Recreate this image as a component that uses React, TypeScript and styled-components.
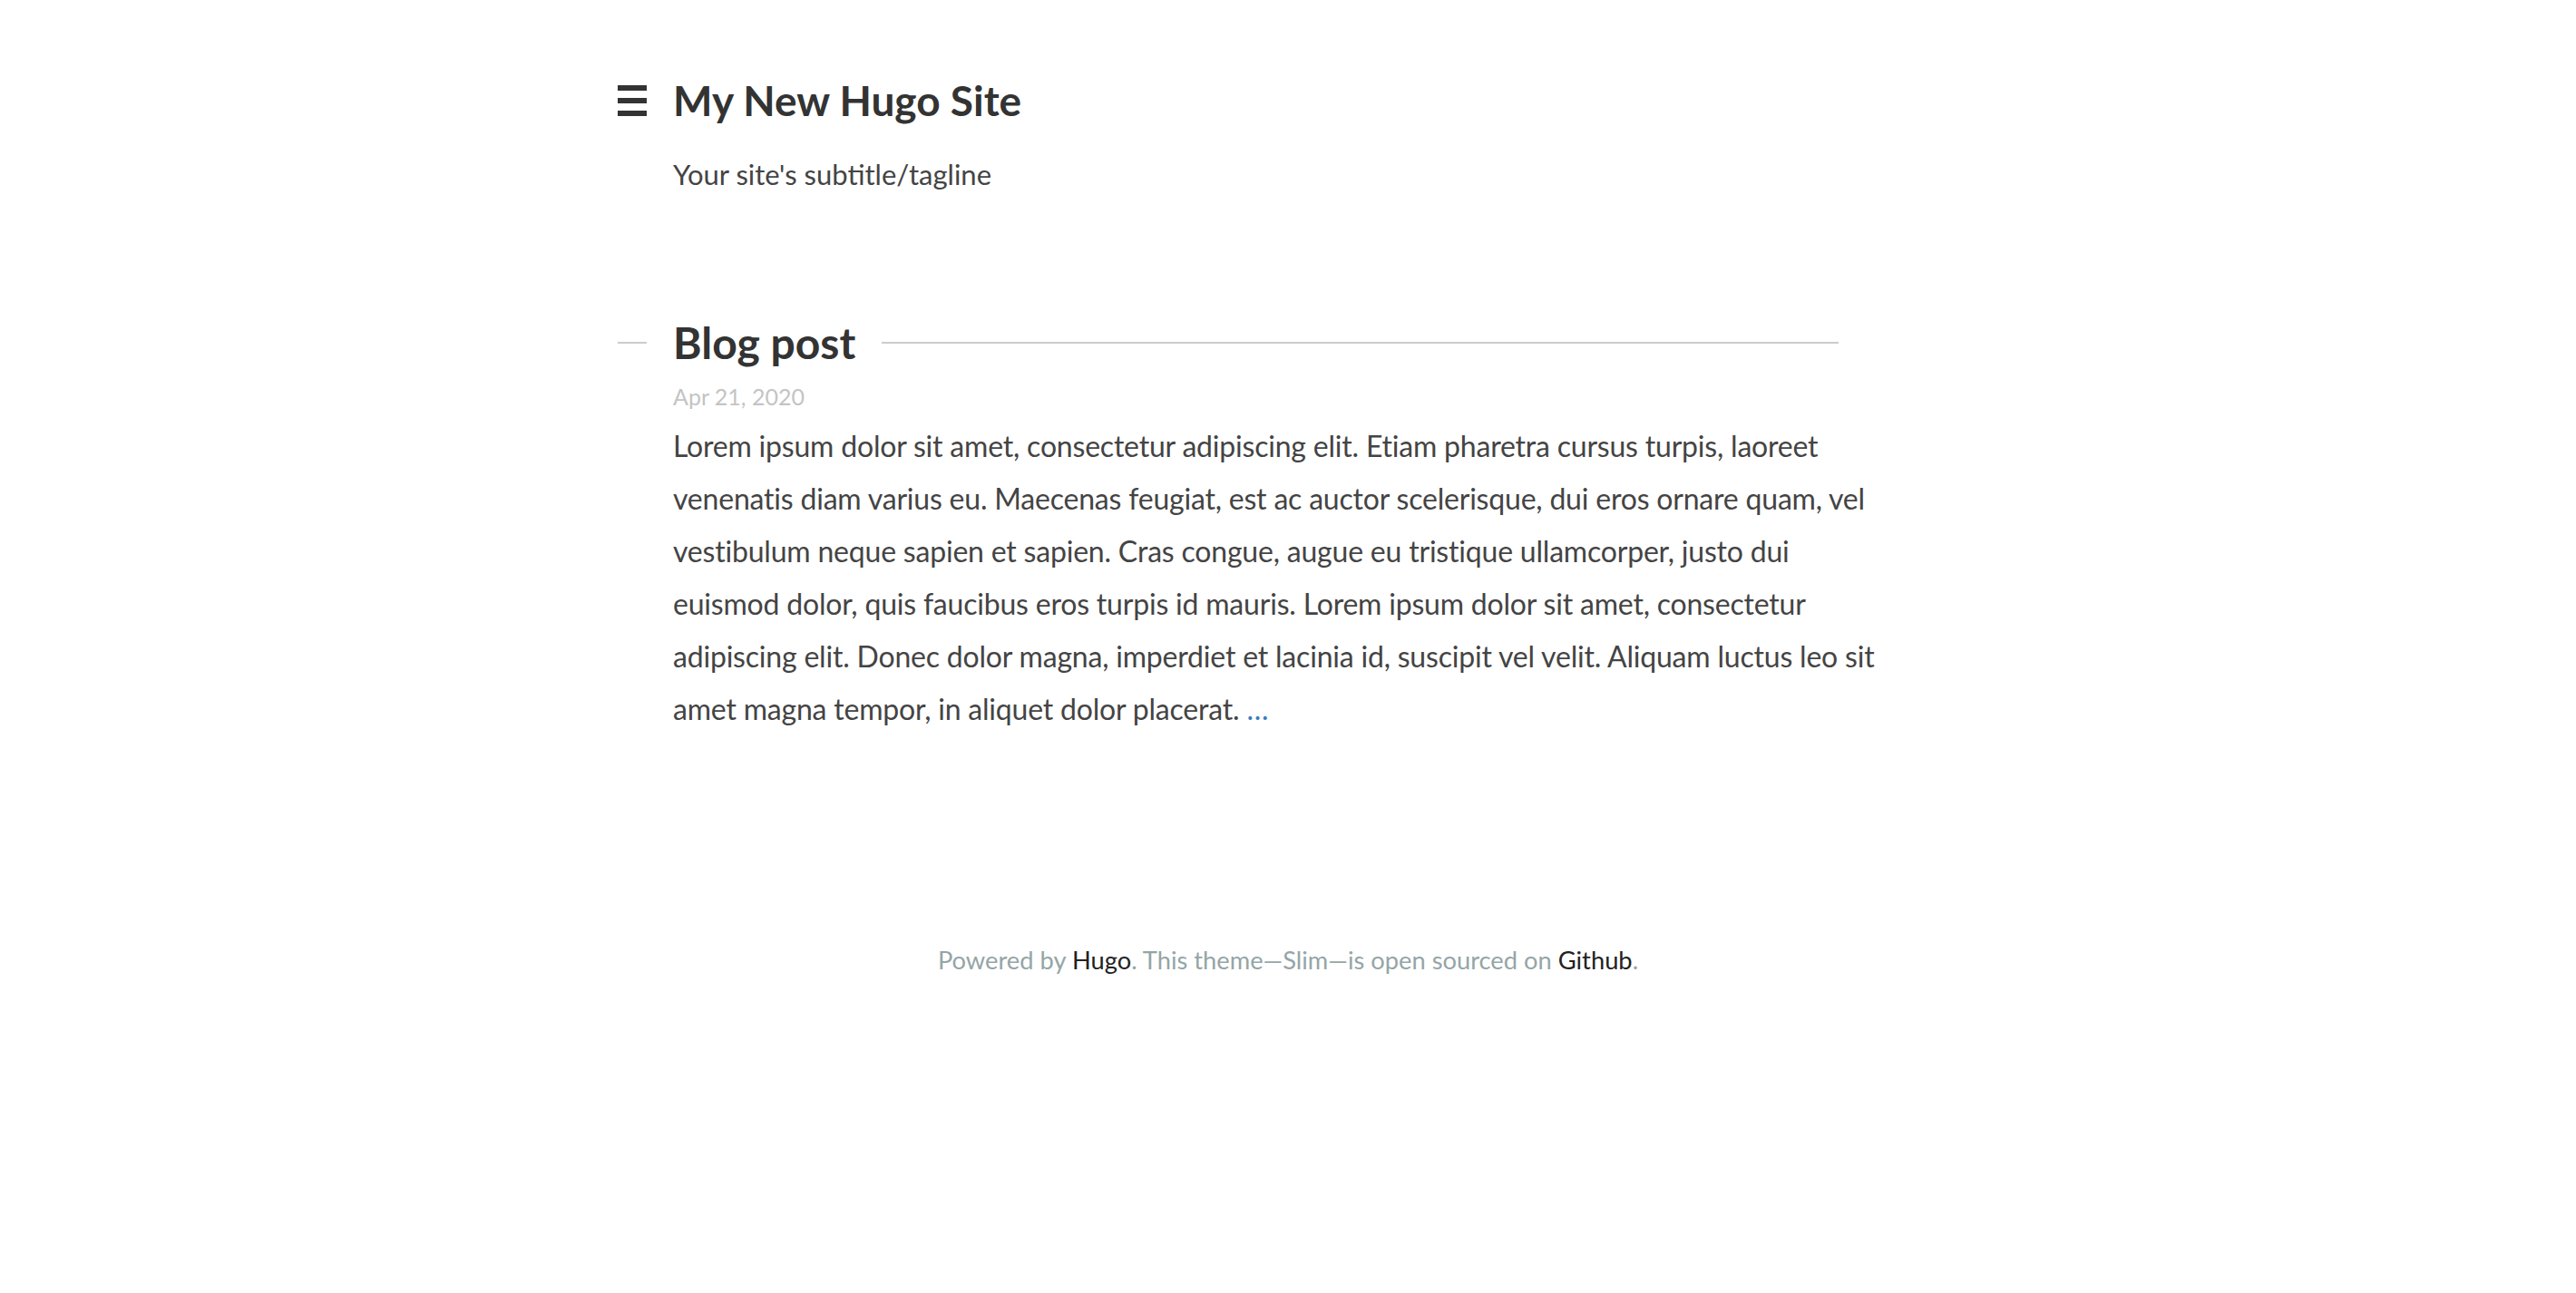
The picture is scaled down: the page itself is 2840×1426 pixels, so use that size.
import React from "react";
import styled, { createGlobalStyle } from "styled-components";

const GlobalStyle = createGlobalStyle`
  html, body {
    margin: 0;
    padding: 0;
    background: #ffffff;
  }
  body {
    font-family: Lato, "Open Sans", "Liberation Sans", sans-serif;
    color: #444444;
  }
`;

function MenuIcon() {
  return (
    <svg width="32" height="36" viewBox="0 0 32 36" aria-hidden="true">
      <rect x="0" y="1" width="32" height="6" fill="#333333" />
      <rect x="0" y="15" width="32" height="6" fill="#333333" />
      <rect x="0" y="29" width="32" height="6" fill="#333333" />
    </svg>
  );
}

function App() {
  return (
    <>
      <GlobalStyle />
      <Page>
        <Header>
          <TitleRow>
            <MenuButton>
              <MenuIcon />
            </MenuButton>
            <SiteTitle>My New Hugo Site</SiteTitle>
          </TitleRow>
          <Tagline>Your site's subtitle/tagline</Tagline>
        </Header>

        <Main>
          <Post>
            <PostHeader>
              <Rule $short />
              <PostTitle>Blog post</PostTitle>
              <Rule />
            </PostHeader>
            <PostDate>Apr 21, 2020</PostDate>
            <Summary>
              Lorem ipsum dolor sit amet, consectetur adipiscing elit. Etiam
              pharetra cursus turpis, laoreet venenatis diam varius eu.
              Maecenas feugiat, est ac auctor scelerisque, dui eros ornare
              quam, vel vestibulum neque sapien et sapien. Cras congue, augue
              eu tristique ullamcorper, justo dui euismod dolor, quis faucibus
              eros turpis id mauris. Lorem ipsum dolor sit amet, consectetur
              adipiscing elit. Donec dolor magna, imperdiet et lacinia id,
              suscipit vel velit. Aliquam luctus leo sit amet magna tempor, in
              aliquet dolor placerat. <MoreLink href="#">…</MoreLink>
            </Summary>
          </Post>
        </Main>

        <Footer>
          Powered by <FooterLink href="#">Hugo</FooterLink>. This
          theme—Slim—is open sourced on <FooterLink href="#">Github</FooterLink>.
        </Footer>
      </Page>
    </>
  );
}

export const Page = styled.div`
  width: 1478px;
  margin: 0 auto;
  padding: 83px 0 0;
  box-sizing: border-box;
`;

export const Header = styled.header`
  display: flex;
  flex-direction: column;
`;

export const TitleRow = styled.div`
  display: flex;
  align-items: center;
  gap: 29px;
`;

export const MenuButton = styled.div`
  display: flex;
  width: 32px;
  height: 55px;
  align-items: center;
`;

export const SiteTitle = styled.h1`
  margin: 0;
  font-size: 46px;
  line-height: 55px;
  font-weight: 700;
  color: #333333;
`;

export const Tagline = styled.p`
  margin: 25px 0 0 61px;
  font-size: 31px;
  line-height: 58px;
  color: #444444;
`;

export const Main = styled.main`
  margin-top: 129px;
`;

export const Post = styled.article`
  display: flex;
  flex-direction: column;
`;

export const PostHeader = styled.div`
  display: flex;
  align-items: center;
  width: 1346px;
`;

export const Rule = styled.span<{ $short?: boolean }>`
  display: block;
  height: 2px;
  background: #cccccc;
  flex: ${(p) => (p.$short ? "0 0 32px" : "1 1 auto")};
  margin: ${(p) => (p.$short ? "0 29px 0 0" : "0 0 0 29px")};
`;

export const PostTitle = styled.h2`
  margin: 0;
  font-size: 48px;
  line-height: 55px;
  font-weight: 700;
  color: #333333;
`;

export const PostDate = styled.div`
  margin: 12px 0 0 61px;
  font-size: 25px;
  line-height: 40px;
  color: #c4c4c4;
`;

export const Summary = styled.p`
  width: 1340px;
  margin: 6px 0 0 61px;
  font-size: 32px;
  letter-spacing: -0.2px;
  line-height: 58px;
  color: #444444;
`;

export const MoreLink = styled.a`
  color: #3a7bbf;
  text-decoration: none;
`;

export const Footer = styled.footer`
  margin-top: 228px;
  text-align: center;
  font-size: 27.3px;
  line-height: 40px;
  color: #95a5a6;
`;

export const FooterLink = styled.a`
  color: #222222;
  text-decoration: none;
`;

export default App;
